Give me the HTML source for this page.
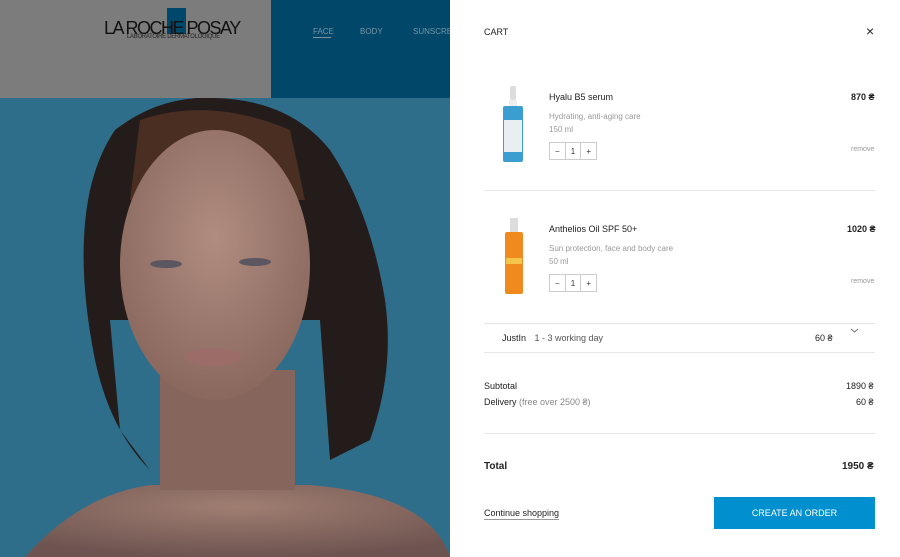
<!DOCTYPE html>
<html><head><meta charset="utf-8"><style>
*{margin:0;padding:0;box-sizing:border-box}
body{width:900px;height:557px;overflow:hidden;font-family:"Liberation Sans",sans-serif;position:relative;background:#fff}
.l{position:absolute;left:0;top:0;width:450px;height:557px;overflow:hidden}
.t{position:absolute;font-size:9px;color:#222;white-space:nowrap}
.g{color:#999;font-size:8px}
.line{position:absolute;left:484px;width:391px;height:1px;background:#e6e6e6}
.q{position:absolute;width:48px;height:18px;border:1px solid #ccc;display:flex;font-size:8px;color:#333}
.q span{flex:1;display:flex;align-items:center;justify-content:center;border-right:1px solid #ccc}
.q span:last-child{border:none}
</style></head><body>
<div class="l">
<svg width="450" height="557" viewBox="0 0 450 557">
<defs>
<radialGradient id="sk" cx="0.5" cy="0.4" r="0.6"><stop offset="0" stop-color="#b08c80"/><stop offset="1" stop-color="#8a685e"/></radialGradient>
<radialGradient id="sh" cx="0.5" cy="0.3" r="0.7"><stop offset="0" stop-color="#a07e72"/><stop offset="1" stop-color="#6e5450"/></radialGradient>
</defs>
<rect width="450" height="557" fill="#2e6e8b"/>
<path d="M115 130 Q160 95 215 98 Q290 100 330 150 Q370 210 385 300 Q395 370 370 440 L330 460 L320 320 L110 320 L120 430 L150 470 Q110 430 95 360 Q75 260 90 190 Q98 155 115 130 Z" fill="#241c1a"/>
<path d="M140 120 Q210 96 290 130 L305 200 L130 200 Z" fill="#4a2e22"/>
<path d="M150 485 Q80 495 25 557 L450 557 Q430 495 310 485 Z" fill="url(#sh)"/>
<rect x="160" y="370" width="135" height="120" fill="#86665c"/>
<ellipse cx="215" cy="265" rx="95" ry="135" fill="url(#sk)"/>
<ellipse cx="166" cy="264" rx="16" ry="4" fill="#5c5660"/>
<ellipse cx="255" cy="262" rx="16" ry="4" fill="#5c5660"/>
<ellipse cx="213" cy="357" rx="28" ry="9" fill="#9c6d68"/>
</svg>
<div style="position:absolute;left:0;top:0;width:271px;height:98px;background:#7c7c7c"></div>
<div style="position:absolute;left:271px;top:0;width:179px;height:98px;background:#00476a"></div>
<div style="position:absolute;left:167px;top:8px;width:19px;height:26px;background:#00486b"></div>
<div class="t" style="left:104px;top:18px;font-size:18px;color:#111;letter-spacing:-1.5px">LA ROCHE POSAY</div>
<div class="t" style="left:127px;top:34px;font-size:6px;color:#222;letter-spacing:-0.3px">LABORATOIRE DERMATOLOGIQUE</div>
<div class="t" style="left:313px;top:27px;font-size:8px;color:#7a93a3">FACE</div>
<div style="position:absolute;left:313px;top:37px;width:18px;height:1px;background:#7a93a3"></div>
<div class="t" style="left:360px;top:27px;font-size:8px;color:#7a93a3">BODY</div>
<div class="t" style="left:413px;top:27px;font-size:8px;color:#7a93a3">SUNSCREEN</div>
</div>
<div style="position:absolute;left:450px;top:0;width:450px;height:557px;background:#fff"></div>
<div class="t" style="left:484px;top:27px;font-size:9px">CART</div>
<div class="t" style="left:866px;top:23px;font-size:14px">×</div>

<svg style="position:absolute;left:500px;top:86px" width="28" height="78"><rect x="10" y="0" width="6" height="14" rx="2" fill="#ddd"/><rect x="9" y="14" width="8" height="6" fill="#eee"/><rect x="3" y="20" width="20" height="56" rx="2" fill="#3a9fd0"/><rect x="4" y="34" width="18" height="32" fill="#e8eef2"/></svg>
<div class="t" style="left:549px;top:92px">Hyalu B5 serum</div>
<div class="t g" style="left:549px;top:112px">Hydrating, anti-aging care</div>
<div class="t g" style="left:549px;top:125px">150 ml</div>
<div class="q" style="left:549px;top:142px"><span>−</span><span>1</span><span>+</span></div>
<div class="t" style="left:851px;top:92px;font-weight:bold">870 ₴</div>
<div class="t g" style="left:851px;top:146px;font-size:7px">remove</div>
<div class="line" style="top:190px"></div>

<svg style="position:absolute;left:503px;top:218px" width="22" height="78"><rect x="7" y="0" width="8" height="14" fill="#ddd"/><rect x="2" y="14" width="18" height="62" rx="2" fill="#ef8a1e"/><rect x="3" y="40" width="16" height="6" fill="#f4c54a"/></svg>
<div class="t" style="left:549px;top:224px">Anthelios Oil SPF 50+</div>
<div class="t g" style="left:549px;top:244px">Sun protection, face and body care</div>
<div class="t g" style="left:549px;top:257px">50 ml</div>
<div class="q" style="left:549px;top:274px"><span>−</span><span>1</span><span>+</span></div>
<div class="t" style="left:847px;top:224px;font-weight:bold">1020 ₴</div>
<div class="t g" style="left:851px;top:278px;font-size:7px">remove</div>
<div class="line" style="top:323px"></div>

<div class="t" style="left:502px;top:333px">JustIn <span style="color:#555;margin-left:6px">1 - 3 working day</span></div>
<div class="t" style="left:815px;top:333px">60 ₴</div>
<svg style="position:absolute;left:850px;top:328px" width="9" height="6"><path d="M1 1L4.5 4L8 1" stroke="#777" fill="none"/></svg>
<div class="line" style="top:352px"></div>

<div class="t" style="left:484px;top:381px">Subtotal</div>
<div class="t" style="left:846px;top:381px">1890 ₴</div>
<div class="t" style="left:484px;top:397px">Delivery <span style="color:#888">(free over 2500 ₴)</span></div>
<div class="t" style="left:856px;top:397px">60 ₴</div>
<div class="line" style="top:433px"></div>

<div class="t" style="left:484px;top:461px;font-size:10px;font-weight:bold">Total</div>
<div class="t" style="left:842px;top:461px;font-size:10px;font-weight:bold">1950 ₴</div>
<div class="t" style="left:484px;top:508px;border-bottom:1px solid #999;padding-bottom:1px">Continue shopping</div>
<div style="position:absolute;left:714px;top:497px;width:161px;height:32px;background:#0090cf;color:#fff;font-size:9px;display:flex;align-items:center;justify-content:center">CREATE AN ORDER</div>
</body></html>
